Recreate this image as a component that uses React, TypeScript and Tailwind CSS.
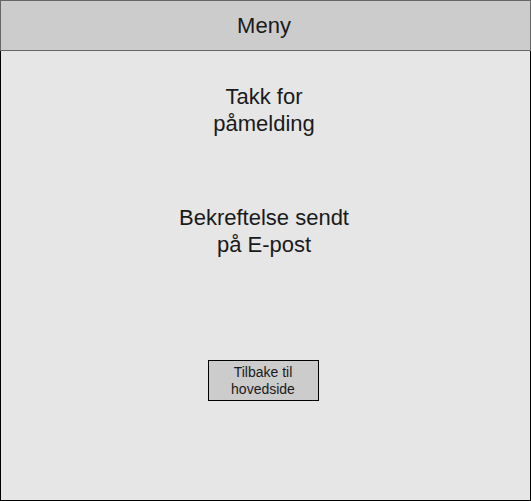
export default function App() {
  return (
    <div
      className="w-[531px] h-[501px] flex flex-col bg-[#e6e6e6] text-[#1a1a1a]"
      style={{ fontFamily: '"Liberation Sans", Arial, sans-serif' }}
    >
      <div className="h-[51px] shrink-0 bg-[#cccccc] border border-[#666666] flex items-center justify-center pr-[3px]">
        <span className="text-[22px] leading-[27px]">Meny</span>
      </div>
      <div className="flex-1 border border-t-0 border-black flex flex-col items-center pr-[3px]">
        <div className="mt-[32px] text-[22px] leading-[27px] text-center">
          Takk for
          <br />
          påmelding
        </div>
        <div className="mt-[67px] text-[22px] leading-[27px] text-center">
          Bekreftelse sendt
          <br />
          på E-post
        </div>
        <div className="mt-[102px] mr-[2px] w-[111px] h-[41px] bg-[#cccccc] border border-black flex items-center justify-center text-[14px] leading-[17px] text-center">
          Tilbake til
          <br />
          hovedside
        </div>
      </div>
    </div>
  );
}
